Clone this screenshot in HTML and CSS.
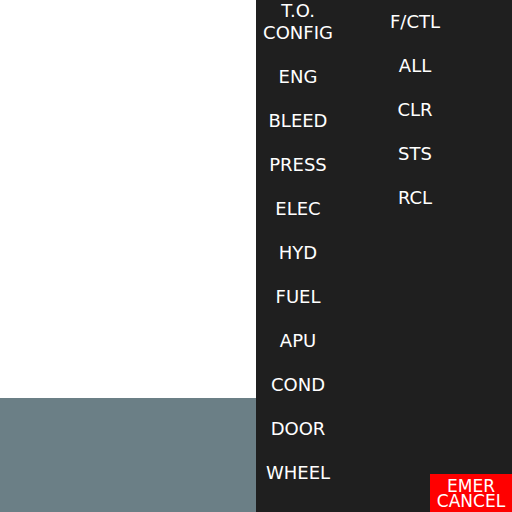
FILE: index.html
```html
<!DOCTYPE html>
<html>
<head>
<meta charset="utf-8">
<link rel="stylesheet" href="styles.css">
</head>
<body>
<div class="app">
  <div class="left">
    <div class="canvas"></div>
    <div class="footer"></div>
  </div>
  <div class="panel">
    <div class="col col1">
      <div class="btn first">T.O.<br>CONFIG</div>
      <div class="btn">ENG</div>
      <div class="btn">BLEED</div>
      <div class="btn">PRESS</div>
      <div class="btn">ELEC</div>
      <div class="btn">HYD</div>
      <div class="btn">FUEL</div>
      <div class="btn">APU</div>
      <div class="btn">COND</div>
      <div class="btn">DOOR</div>
      <div class="btn">WHEEL</div>
    </div>
    <div class="col col2">
      <div class="btn">F/CTL</div>
      <div class="btn">ALL</div>
      <div class="btn">CLR</div>
      <div class="btn">STS</div>
      <div class="btn">RCL</div>
    </div>
    <div class="emer">EMER<br>CANCEL</div>
  </div>
</div>
</body>
</html>
```
FILE: styles.css
```css
html, body {
  margin: 0;
  padding: 0;
  width: 512px;
  height: 512px;
  overflow: hidden;
}
.app {
  display: flex;
  width: 512px;
  height: 512px;
  font-family: "DejaVu Sans", sans-serif;
  font-size: 18px;
}
.left {
  width: 256px;
  display: flex;
  flex-direction: column;
}
.canvas {
  height: 398px;
  background: #ffffff;
}
.footer {
  flex: 1;
  background: #6b7f86;
}
.panel {
  position: relative;
  width: 256px;
  background: #1f1f1f;
  display: flex;
  align-items: flex-start;
  color: #ffffff;
}
.col {
  display: flex;
  flex-direction: column;
}
.col1 {
  width: 84px;
}
.col2 {
  width: 150px;
}
.btn {
  height: 44px;
  line-height: 22px;
  padding: 11px 0;
  box-sizing: border-box;
  text-align: center;
}
.btn.first {
  padding: 0;
  height: 55px;
}
.emer {
  position: absolute;
  right: 0;
  bottom: 0;
  width: 82px;
  height: 38px;
  background: #ff0000;
  color: #ffffff;
  text-align: center;
  font-size: 17px;
  line-height: 15px;
  padding-top: 5px;
  box-sizing: border-box;
}
```
